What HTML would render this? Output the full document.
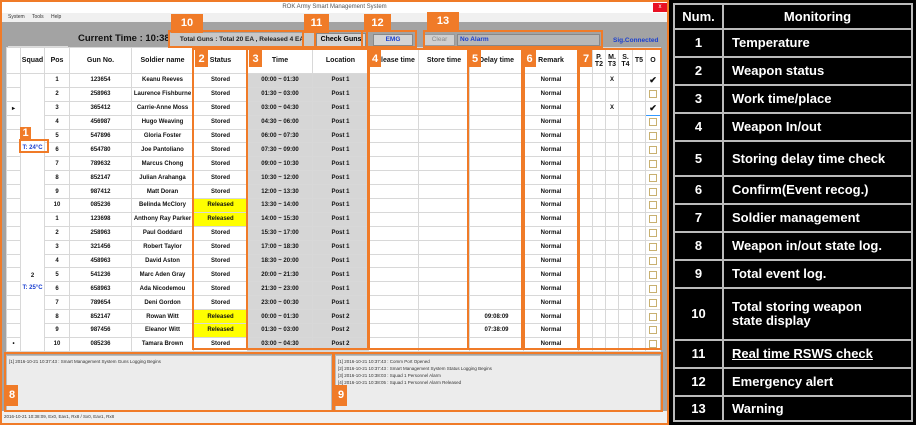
<!DOCTYPE html>
<html><head><meta charset="utf-8"><style>
*{box-sizing:border-box;margin:0;padding:0}
body{width:916px;height:425px;background:#000;position:relative;overflow:hidden;font-family:"Liberation Sans",sans-serif}
.win{position:absolute;left:0;top:0;width:669px;height:425px;background:#f07b28}
.inner{position:absolute;left:2px;top:2px;width:665px;height:421px;background:#a3a3a3}
.title{position:absolute;left:0;top:0;width:665px;height:11px;background:#fff;font-size:6px;color:#555;text-align:center;line-height:11px}
.menu{position:absolute;left:0;top:11px;width:665px;height:9px;background:#f0f0f0;font-size:5px;color:#333;line-height:9px;padding-left:6px;word-spacing:6px}
.ab{position:absolute}
table.g{position:absolute;left:4px;top:45px;width:654px;border-collapse:collapse;table-layout:fixed;background:#fff}
table.g td{border:1px solid #d8d8d8;font-size:6px;font-weight:bold;text-align:center;height:13.9px;padding:0;color:#111;white-space:nowrap;overflow:hidden}
table.g tr.h td{height:26px;font-size:7px}
td.gy{background:#d6d6d6}
td.y{background:#ff0}
.lb{position:absolute;background:#f07b28;color:#fff;font-weight:bold;font-size:11px;text-align:center;line-height:18px}
.ob{position:absolute;border:2px solid #f07b28}
.cb{display:inline-block;width:8px;height:8px;border:1px solid #c8b070;vertical-align:middle}
.rt{position:absolute;left:673px;top:3px;width:240px;border-collapse:collapse;table-layout:fixed}
.rt td{border:2px solid #bbb;color:#fff;font-weight:bold;font-size:13px;padding:0 0 0 8px;line-height:14px;white-space:nowrap;overflow:hidden}
.rt td:first-child{text-align:center;padding:0}
.log{position:absolute;top:353px;height:56px;background:#ececec;border:1px solid #bbb;font-size:4.5px;color:#333;line-height:7px;padding:2px}
</style></head><body>
<div class="win"><div class="inner">
<div class="title">ROK Army Smart Management System<span style="position:absolute;right:0;top:1px;width:14px;height:9px;background:#e81123;color:#fff;line-height:9px">x</span></div>
<div class="menu">System Tools Help</div>
<div class="ab" style="left:76px;top:31px;font-size:9.5px;font-weight:bold;color:#111">Current Time : 10:38:09</div>
<div class="ab" style="left:6px;top:44px;width:60px;height:1px;background:#ddd"></div>
<div class="ab" style="left:168px;top:31px;width:144px;height:14px;background:#c8c8c8;font-size:6.5px;font-weight:bold;line-height:14px;text-align:center;color:#222">Total Guns :  Total 20 EA , Released 4 EA</div>
<div class="ab" style="left:314px;top:31px;width:50px;height:14px;background:#d4d4d4;border:1px solid #888;font-size:7px;font-weight:bold;line-height:12px;text-align:center">Check Guns</div>
<div class="ab" style="left:371px;top:32px;width:40px;height:12px;background:#d4d4d4;border:1px solid #888;font-size:6.5px;font-weight:bold;line-height:10px;text-align:center;color:#1a3fd0">EMG</div>
<div class="ab" style="left:422px;top:32px;width:31px;height:12px;background:#d0d0d0;border:1px solid #999;font-size:6.5px;line-height:10px;text-align:center;color:#888">Clear</div>
<div class="ab" style="left:455px;top:32px;width:143px;height:12px;background:#b8b8b8;border:1px solid #888;font-size:6.5px;font-weight:bold;line-height:10px;color:#1a3fd0;padding-left:2px">No Alarm</div>
<div class="ab" style="left:611px;top:35px;font-size:6.5px;font-weight:bold;color:#1a3fd0">Sig.Connected</div>
<table class="g">
<colgroup><col style="width:14px"><col style="width:24px"><col style="width:25px"><col style="width:62px"><col style="width:62px"><col style="width:54px"><col style="width:65px"><col style="width:56px"><col style="width:50px"><col style="width:51px"><col style="width:54px"><col style="width:55px"><col style="width:14px"><col style="width:13px"><col style="width:13px"><col style="width:14px"><col style="width:13px"><col style="width:15px"></colgroup>
<tr class="h"><td></td><td>Squad</td><td>Pos</td><td>Gun No.</td><td>Soldier name</td><td>Status</td><td>Time</td><td>Location</td><td>Release time</td><td>Store time</td><td>Delay time</td><td>Remark</td><td>P.<br>T1</td><td>P.<br>T2</td><td>M.<br>T3</td><td>S.<br>T4</td><td>T5</td><td>O</td></tr>
<tr><td></td><td rowspan="10" style="color:#1a3fd0;vertical-align:middle;padding-top:10px">T: 24°C</td><td>1</td><td>123654</td><td>Keanu Reeves</td><td>Stored</td><td class="gy">00:00 ~ 01:30</td><td class="gy">Post 1</td><td></td><td></td><td></td><td>Normal</td><td></td><td></td><td>X</td><td></td><td></td><td style="font-size:9px">✔</td></tr>
<tr><td></td><td>2</td><td>258963</td><td>Laurence Fishburne</td><td>Stored</td><td class="gy">01:30 ~ 03:00</td><td class="gy">Post 1</td><td></td><td></td><td></td><td>Normal</td><td></td><td></td><td></td><td></td><td></td><td><span class="cb"></span></td></tr>
<tr><td>▸</td><td>3</td><td>365412</td><td>Carrie-Anne Moss</td><td>Stored</td><td class="gy">03:00 ~ 04:30</td><td class="gy">Post 1</td><td></td><td></td><td></td><td>Normal</td><td></td><td></td><td>X</td><td></td><td></td><td style="border:1px solid #39f;font-size:9px">✔</td></tr>
<tr><td></td><td>4</td><td>456987</td><td>Hugo Weaving</td><td>Stored</td><td class="gy">04:30 ~ 06:00</td><td class="gy">Post 1</td><td></td><td></td><td></td><td>Normal</td><td></td><td></td><td></td><td></td><td></td><td><span class="cb"></span></td></tr>
<tr><td></td><td>5</td><td>547896</td><td>Gloria Foster</td><td>Stored</td><td class="gy">06:00 ~ 07:30</td><td class="gy">Post 1</td><td></td><td></td><td></td><td>Normal</td><td></td><td></td><td></td><td></td><td></td><td><span class="cb"></span></td></tr>
<tr><td></td><td>6</td><td>654780</td><td>Joe Pantoliano</td><td>Stored</td><td class="gy">07:30 ~ 09:00</td><td class="gy">Post 1</td><td></td><td></td><td></td><td>Normal</td><td></td><td></td><td></td><td></td><td></td><td><span class="cb"></span></td></tr>
<tr><td></td><td>7</td><td>789632</td><td>Marcus Chong</td><td>Stored</td><td class="gy">09:00 ~ 10:30</td><td class="gy">Post 1</td><td></td><td></td><td></td><td>Normal</td><td></td><td></td><td></td><td></td><td></td><td><span class="cb"></span></td></tr>
<tr><td></td><td>8</td><td>852147</td><td>Julian Arahanga</td><td>Stored</td><td class="gy">10:30 ~ 12:00</td><td class="gy">Post 1</td><td></td><td></td><td></td><td>Normal</td><td></td><td></td><td></td><td></td><td></td><td><span class="cb"></span></td></tr>
<tr><td></td><td>9</td><td>987412</td><td>Matt Doran</td><td>Stored</td><td class="gy">12:00 ~ 13:30</td><td class="gy">Post 1</td><td></td><td></td><td></td><td>Normal</td><td></td><td></td><td></td><td></td><td></td><td><span class="cb"></span></td></tr>
<tr><td></td><td>10</td><td>085236</td><td>Belinda McClory</td><td class="y">Released</td><td class="gy">13:30 ~ 14:00</td><td class="gy">Post 1</td><td></td><td></td><td></td><td>Normal</td><td></td><td></td><td></td><td></td><td></td><td><span class="cb"></span></td></tr>
<tr><td></td><td rowspan="10">2<br><br><span style="color:#1a3fd0">T: 25°C</span></td><td>1</td><td>123698</td><td>Anthony Ray Parker</td><td class="y">Released</td><td class="gy">14:00 ~ 15:30</td><td class="gy">Post 1</td><td></td><td></td><td></td><td>Normal</td><td></td><td></td><td></td><td></td><td></td><td><span class="cb"></span></td></tr>
<tr><td></td><td>2</td><td>258963</td><td>Paul Goddard</td><td>Stored</td><td class="gy">15:30 ~ 17:00</td><td class="gy">Post 1</td><td></td><td></td><td></td><td>Normal</td><td></td><td></td><td></td><td></td><td></td><td><span class="cb"></span></td></tr>
<tr><td></td><td>3</td><td>321456</td><td>Robert Taylor</td><td>Stored</td><td class="gy">17:00 ~ 18:30</td><td class="gy">Post 1</td><td></td><td></td><td></td><td>Normal</td><td></td><td></td><td></td><td></td><td></td><td><span class="cb"></span></td></tr>
<tr><td></td><td>4</td><td>458963</td><td>David Aston</td><td>Stored</td><td class="gy">18:30 ~ 20:00</td><td class="gy">Post 1</td><td></td><td></td><td></td><td>Normal</td><td></td><td></td><td></td><td></td><td></td><td><span class="cb"></span></td></tr>
<tr><td></td><td>5</td><td>541236</td><td>Marc Aden Gray</td><td>Stored</td><td class="gy">20:00 ~ 21:30</td><td class="gy">Post 1</td><td></td><td></td><td></td><td>Normal</td><td></td><td></td><td></td><td></td><td></td><td><span class="cb"></span></td></tr>
<tr><td></td><td>6</td><td>658963</td><td>Ada Nicodemou</td><td>Stored</td><td class="gy">21:30 ~ 23:00</td><td class="gy">Post 1</td><td></td><td></td><td></td><td>Normal</td><td></td><td></td><td></td><td></td><td></td><td><span class="cb"></span></td></tr>
<tr><td></td><td>7</td><td>789654</td><td>Deni Gordon</td><td>Stored</td><td class="gy">23:00 ~ 00:30</td><td class="gy">Post 1</td><td></td><td></td><td></td><td>Normal</td><td></td><td></td><td></td><td></td><td></td><td><span class="cb"></span></td></tr>
<tr><td></td><td>8</td><td>852147</td><td>Rowan Witt</td><td class="y">Released</td><td class="gy">00:00 ~ 01:30</td><td class="gy">Post 2</td><td></td><td></td><td>09:08:09</td><td>Normal</td><td></td><td></td><td></td><td></td><td></td><td><span class="cb"></span></td></tr>
<tr><td></td><td>9</td><td>987456</td><td>Eleanor Witt</td><td class="y">Released</td><td class="gy">01:30 ~ 03:00</td><td class="gy">Post 2</td><td></td><td></td><td>07:38:09</td><td>Normal</td><td></td><td></td><td></td><td></td><td></td><td><span class="cb"></span></td></tr>
<tr><td>•</td><td>10</td><td>085236</td><td>Tamara Brown</td><td>Stored</td><td class="gy">03:00 ~ 04:30</td><td class="gy">Post 2</td><td></td><td></td><td></td><td>Normal</td><td></td><td></td><td></td><td></td><td></td><td><span class="cb"></span></td></tr>
</table>
<div class="log" style="left:4px;width:326px">[1] 2016-10-21 10:37:43 : Smart Management System Guns Logging Begins</div>
<div class="log" style="left:333px;width:326px">[1] 2016-10-21 10:37:43 : Comm Port Opened<br>[2] 2016-10-21 10:37:43 : Smart Management System Status Logging Begins<br>[3] 2016-10-21 10:38:03 : Squad 1 Personnel Alarm<br>[4] 2016-10-21 10:38:05 : Squad 1 Personnel Alarm Released</div>
<div class="ab" style="left:0;top:409px;width:665px;height:12px;background:#f0f0f0;font-size:4.5px;color:#333;line-height:12px;padding-left:2px">2016-10-21 10:38:09, Ex0, Eav1, Rx8 / Sx0, Eav1, Rx8</div>
</div>
<div class="ob" style="left:168px;top:30px;width:148px;height:18px"></div>
<div class="ob" style="left:302px;top:30px;width:66px;height:18px"></div>
<div class="ob" style="left:361px;top:30px;width:56px;height:18px"></div>
<div class="ob" style="left:423px;top:30px;width:180px;height:18px"></div>
<div class="ob" style="left:19px;top:139px;width:30px;height:14px"></div>
<div class="ob" style="left:192px;top:48px;width:56px;height:302px"></div>
<div class="ob" style="left:246px;top:48px;width:124px;height:302px"></div>
<div class="ob" style="left:367px;top:48px;width:102px;height:302px"></div>
<div class="ob" style="left:467px;top:48px;width:58px;height:302px"></div>
<div class="ob" style="left:521px;top:48px;width:58px;height:302px"></div>
<div class="ob" style="left:578px;top:48px;width:84px;height:302px"></div>
<div class="ob" style="left:4px;top:352px;width:330px;height:60px"></div>
<div class="ob" style="left:333px;top:352px;width:330px;height:60px"></div>
<div class="lb" style="left:171px;top:14px;width:32px;height:19px">10</div>
<div class="lb" style="left:304px;top:14px;width:25px;height:19px">11</div>
<div class="lb" style="left:364px;top:14px;width:27px;height:17px">12</div>
<div class="lb" style="left:427px;top:12px;width:32px;height:19px">13</div>
<div class="lb" style="left:20px;top:127px;width:11px;height:13px;line-height:13px">1</div>
<div class="lb" style="left:195px;top:50px;width:13px;height:17px">2</div>
<div class="lb" style="left:249px;top:50px;width:13px;height:17px">3</div>
<div class="lb" style="left:369px;top:50px;width:12px;height:17px">4</div>
<div class="lb" style="left:469px;top:50px;width:12px;height:17px">5</div>
<div class="lb" style="left:523px;top:50px;width:13px;height:17px">6</div>
<div class="lb" style="left:580px;top:50px;width:12px;height:17px">7</div>
<div class="lb" style="left:6px;top:385px;width:12px;height:21px;line-height:21px">8</div>
<div class="lb" style="left:335px;top:385px;width:12px;height:21px;line-height:21px">9</div>
</div>
<table class="rt">
<colgroup><col style="width:49px"><col></colgroup>
<tr style="height:25px"><td>Num.</td><td style="text-align:center;padding:0">Monitoring</td></tr>
<tr style="height:28px"><td>1</td><td>Temperature</td></tr>
<tr style="height:28px"><td>2</td><td>Weapon status</td></tr>
<tr style="height:28px"><td>3</td><td>Work time/place</td></tr>
<tr style="height:28px"><td>4</td><td>Weapon In/out</td></tr>
<tr style="height:35px"><td>5</td><td>Storing delay time check</td></tr>
<tr style="height:28px"><td>6</td><td>Confirm(Event recog.)</td></tr>
<tr style="height:28px"><td>7</td><td>Soldier management</td></tr>
<tr style="height:28px"><td>8</td><td>Weapon in/out state log.</td></tr>
<tr style="height:28px"><td>9</td><td>Total event log.</td></tr>
<tr style="height:52px"><td>10</td><td style="white-space:normal">Total storing weapon<br>state display</td></tr>
<tr style="height:28px"><td>11</td><td style="text-decoration:underline">Real time RSWS check</td></tr>
<tr style="height:28px"><td>12</td><td>Emergency alert</td></tr>
<tr style="height:25px"><td>13</td><td>Warning</td></tr>
</table>
</body></html>
